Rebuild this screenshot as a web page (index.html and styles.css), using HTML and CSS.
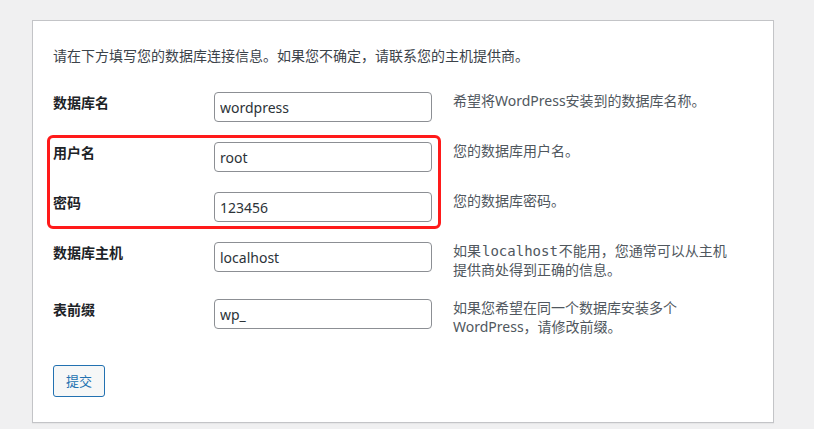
FILE: index.html
```html
<!DOCTYPE html>
<html lang="zh-CN">
<head>
<meta charset="utf-8">
<title>数据库连接信息</title>
<link rel="stylesheet" href="styles.css">
</head>
<body>
<main class="card">
  <p class="intro">请在下方填写您的数据库连接信息。如果您不确定，请联系您的主机提供商。</p>
  <form class="form">
    <div class="row">
      <label class="label" for="dbname">数据库名</label>
      <input class="field" id="dbname" type="text" value="wordpress">
      <div class="desc">希望将WordPress安装到的数据库名称。</div>
    </div>
    <div class="group">
      <div class="row">
        <label class="label" for="uname">用户名</label>
        <input class="field" id="uname" type="text" value="root">
        <div class="desc">您的数据库用户名。</div>
      </div>
      <div class="row">
        <label class="label" for="pwd">密码</label>
        <input class="field" id="pwd" type="text" value="123456">
        <div class="desc">您的数据库密码。</div>
      </div>
      <div class="highlight"></div>
    </div>
    <div class="row">
      <label class="label" for="dbhost">数据库主机</label>
      <input class="field" id="dbhost" type="text" value="localhost">
      <div class="desc">如果<code class="code">localhost</code>不能用，您通常可以从主机提供商处得到正确的信息。</div>
    </div>
    <div class="row">
      <label class="label" for="prefix">表前缀</label>
      <input class="field" id="prefix" type="text" value="wp_">
      <div class="desc">如果您希望在同一个数据库安装多个WordPress，请修改前缀。</div>
    </div>
    <div class="actions">
      <button class="button" type="button">提交</button>
    </div>
  </form>
</main>
</body>
</html>
```
FILE: styles.css
```css
html, body {
  margin: 0;
  padding: 0;
}
body {
  background: #f0f0f1;
  font-family: "Noto Sans", "Noto Sans CJK SC", sans-serif;
  font-size: 14px;
  color: #3c434a;
  padding: 20px 0 0 32px;
  height: 429px;
  box-sizing: border-box;
  overflow: hidden;
}
.card {
  width: 742px;
  box-sizing: border-box;
  background: #fff;
  border: 1px solid #c3c4c7;
  box-shadow: 0 1px 1px rgba(0, 0, 0, 0.04);
  padding: 25px 20px 25px 20px;
}
.intro {
  margin: 0 0 26px 0;
  line-height: 20px;
  color: #3c434a;
}
.form {
  display: flex;
  flex-direction: column;
  gap: 20px;
}
.group {
  display: flex;
  flex-direction: column;
  gap: 20px;
  position: relative;
}
.row {
  display: grid;
  grid-template-columns: 141px 218px 280px;
  column-gap: 20px;
  align-items: start;
}
.label {
  font-weight: 700;
  color: #1d2327;
  line-height: 21px;
  font-size: 14px;
}
.field {
  box-sizing: border-box;
  width: 218px;
  height: 30px;
  margin: 0;
  padding: 0 5px;
  border: 1px solid #8c8f94;
  border-radius: 4px;
  background: #fff;
  color: #2c3338;
  font-family: "Noto Sans", "Noto Sans CJK SC", sans-serif;
  font-size: 14px;
  outline: none;
}
.desc {
  margin-top: -1px;
  padding-left: 1px;
  line-height: 19px;
  color: #50575e;
}
.code {
  font-family: "DejaVu Sans Mono", monospace;
  font-size: 14px;
  line-height: 1;
  margin: 0 1px;
}
.highlight {
  position: absolute;
  left: -6px;
  top: -7px;
  width: 394px;
  bottom: -7px;
  box-sizing: border-box;
  border: 3px solid #ff1a1a;
  border-radius: 6px;
  pointer-events: none;
}
.actions {
  padding-top: 9px;
}
.button {
  box-sizing: border-box;
  height: 32px;
  padding: 0 12px;
  border: 1px solid #2271b1;
  border-radius: 3px;
  background: #f6f7f7;
  color: #2271b1;
  font-family: "Noto Sans", "Noto Sans CJK SC", sans-serif;
  font-size: 13px;
  line-height: 30px;
  cursor: pointer;
}
```
